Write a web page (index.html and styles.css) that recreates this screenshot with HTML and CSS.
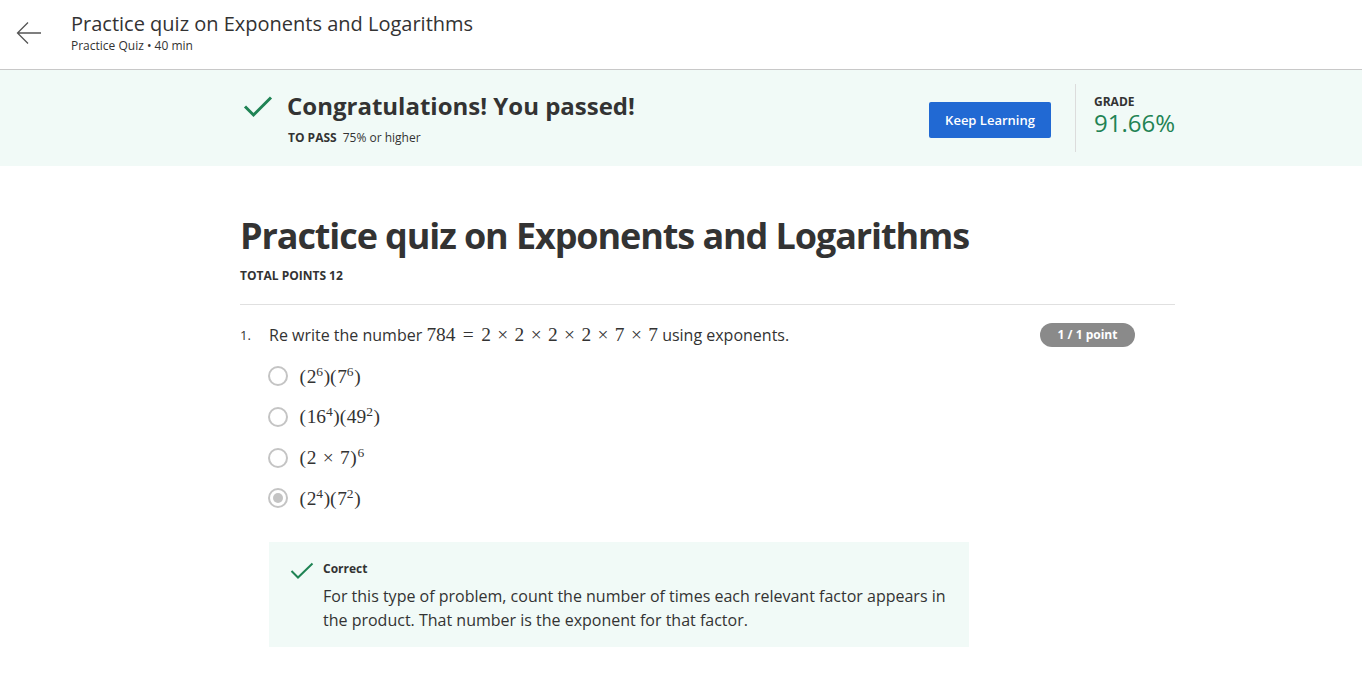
FILE: index.html
```html
<!DOCTYPE html>
<html lang="en">
<head>
<meta charset="utf-8">
<title>Practice quiz on Exponents and Logarithms</title>
<link rel="stylesheet" href="styles.css">
</head>
<body>
<header class="topbar">
  <button class="back" aria-label="Back">
    <svg width="26" height="24" viewBox="0 0 26 24"><path d="M25 12H2M12 1.5L1.5 12 12 22.5" fill="none" stroke="#555" stroke-width="1.3"/></svg>
  </button>
  <div class="top-titles">
    <div class="top-title">Practice quiz on Exponents and Logarithms</div>
    <div class="top-sub">Practice Quiz • 40 min</div>
  </div>
</header>

<section class="banner">
  <div class="banner-inner">
    <div class="pass">
      <svg class="check-big" width="30" height="24" viewBox="0 0 30 24"><path d="M2 11.5l8.5 8.5L28 2.5" fill="none" stroke="#1f8354" stroke-width="3"/></svg>
      <div>
        <div class="congrats">Congratulations! You passed!</div>
        <div class="topass"><b>TO PASS</b>75% or higher</div>
      </div>
    </div>
    <button class="keep">Keep Learning</button>
    <div class="grade">
      <div class="grade-label">GRADE</div>
      <div class="grade-val">91.66%</div>
    </div>
  </div>
</section>

<main class="content">
  <h1 class="quiz-title">Practice quiz on Exponents and Logarithms</h1>
  <div class="total">TOTAL POINTS 12</div>
  <hr class="rule">

  <div class="question">
    <div class="qnum">1.</div>
    <div class="qbody">
      <div class="qhead">
        <p class="qtext">Re write the number <span class="m">784<span class="rel">=</span>2<span class="op">×</span>2<span class="op">×</span>2<span class="op">×</span>2<span class="op">×</span>7<span class="op">×</span>7</span> using exponents.</p>
        <span class="pill">1 / 1 point</span>
      </div>
      <ul class="options">
        <li><span class="radio"></span><span class="m"><span class="p">(</span>2<sup>6</sup><span class="p">)(</span>7<sup>6</sup><span class="p">)</span></span></li>
        <li><span class="radio"></span><span class="m"><span class="p">(</span>16<sup>4</sup><span class="p">)(</span>49<sup>2</sup><span class="p">)</span></span></li>
        <li><span class="radio"></span><span class="m"><span class="p">(</span>2<span class="op">×</span>7<span class="p">)</span><sup>6</sup></span></li>
        <li><span class="radio checked"></span><span class="m"><span class="p">(</span>2<sup>4</sup><span class="p">)(</span>7<sup>2</sup><span class="p">)</span></span></li>
      </ul>
      <div class="feedback">
        <svg class="check-small" width="24" height="18" viewBox="0 0 24 18"><path d="M1.5 9l6.5 6.5L22.5 1.5" fill="none" stroke="#1f8354" stroke-width="2"/></svg>
        <div>
          <div class="fb-title">Correct</div>
          <p class="fb-text">For this type of problem, count the number of times each relevant factor appears in the product. That number is the exponent for that factor.</p>
        </div>
      </div>
    </div>
  </div>
</main>
</body>
</html>
```

FILE: styles.css
```css
* { box-sizing: border-box; }
body {
  margin: 0;
  font-family: "Open Sans", "Noto Sans", sans-serif;
  color: #333;
  background: #fff;
}
.topbar {
  display: flex;
  align-items: flex-start;
  height: 70px;
  border-bottom: 1px solid #c8c8c8;
  padding: 12px 0 0 16px;
}
.back {
  border: 0;
  background: none;
  padding: 0;
  margin-top: 9px;
  width: 26px;
  height: 24px;
  cursor: pointer;
}
.top-titles { margin-left: 29px; }
.top-title {
  font-size: 20px;
  line-height: 24px;
  color: #333;
}
.top-sub {
  font-size: 12px;
  line-height: 18px;
  color: #333;
  margin-top: 1px;
}
.banner {
  background: #f1faf7;
  height: 96px;
}
.banner-inner {
  width: 935px;
  margin-left: 240px;
  display: flex;
  align-items: center;
  height: 100%;
  padding-left: 3px;
}
.pass {
  display: flex;
  align-items: flex-start;
  flex: 1;
}
.check-big { margin-top: 4px; margin-right: 14px; }
.congrats {
  font-size: 24px;
  font-weight: 700;
  line-height: 30px;
  color: #333;
}
.topass {
  font-size: 12px;
  line-height: 16px;
  margin-top: 9px;
  margin-left: 1px;
  color: #333;
}
.topass b { margin-right: 6px; }
.keep {
  background: #2169d3;
  color: #fff;
  border: 0;
  border-radius: 2px;
  font-family: inherit;
  font-size: 13px;
  font-weight: 600;
  width: 122px;
  height: 36px;
  margin-right: 24px;
  margin-top: 4px;
}
.grade {
  border-left: 1px solid #dcdcdc;
  height: 68px;
  padding: 11px 0 0 18px;
  width: 100px;
}
.grade-label {
  font-size: 12px;
  font-weight: 700;
  line-height: 14px;
}
.grade-val {
  font-size: 24px;
  line-height: 28px;
  margin-top: 0;
  color: #1f8354;
}
.content {
  width: 935px;
  margin-left: 240px;
  padding-top: 46px;
}
.quiz-title {
  font-size: 36px;
  font-weight: 700;
  line-height: 48px;
  margin: 0;
  letter-spacing: -1.1px;
  color: #333;
}
.total {
  font-size: 12px;
  font-weight: 700;
  line-height: 16px;
  margin-top: 8px;
}
.rule {
  border: 0;
  border-top: 1px solid #e0e0e0;
  margin: 20px 0 0;
}
.question {
  display: flex;
  padding-top: 18px;
}
.qnum {
  width: 29px;
  font-size: 13px;
  line-height: 24px;
}
.qbody { width: 866px; }
.qhead {
  display: flex;
  justify-content: space-between;
  align-items: center;
}
.qtext {
  margin: 0;
  font-size: 16px;
  line-height: 24px;
}
.m {
  font-family: "Liberation Serif", "DejaVu Serif", serif;
  font-size: 19.4px;
  line-height: 1;
}
.p { margin: 0 0.03em; }
.op { margin: 0 0.33em; }
.rel { margin: 0 0.38em; }
sup {
  font-size: 13.5px;
  line-height: 0;
  vertical-align: 0.5em;
}
.pill {
  background: #8a8a8a;
  color: #fff;
  font-size: 12px;
  font-weight: 700;
  border-radius: 12px;
  width: 95px;
  height: 24px;
  line-height: 24px;
  text-align: center;
}
.options {
  list-style: none;
  margin: 9px 0 0;
  padding: 0;
}
.options li {
  display: flex;
  align-items: center;
  height: 40.7px;
}
.radio {
  width: 20px;
  height: 20px;
  border: 2px solid #c4c4c4;
  border-radius: 50%;
  margin-right: 11px;
  margin-left: -1px;
  display: flex;
  align-items: center;
  justify-content: center;
}
.radio.checked::after {
  content: "";
  width: 10px;
  height: 10px;
  border-radius: 50%;
  background: #c4c4c4;
}
.feedback {
  margin-top: 23px;
  background: #f1faf7;
  width: 700px;
  display: flex;
  padding: 18px 20px 15px 21px;
}
.check-small { margin-top: 2px; margin-right: 9px; flex: none; }
.fb-title {
  font-size: 12px;
  font-weight: 700;
  line-height: 18px;
}
.fb-text {
  margin: 6px 0 0;
  font-size: 16px;
  line-height: 24px;
}
```
